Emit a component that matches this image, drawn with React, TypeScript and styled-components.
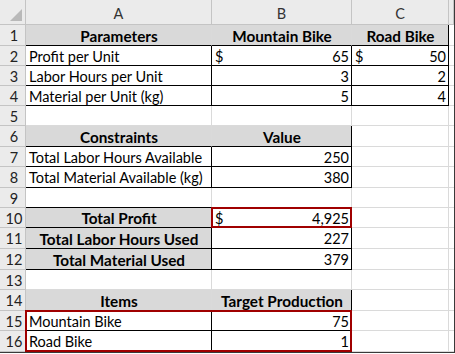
import React from 'react';
import styled, { createGlobalStyle } from 'styled-components';

const GlobalStyle = createGlobalStyle`
  html, body { margin: 0; padding: 0; background: #ffffff; }
  body { font-family: Lato, "Liberation Sans", sans-serif; }
`;

const ROW_HEIGHTS = [25, 21, 20, 20, 20, 20, 21, 20, 21, 20, 20, 21, 21, 20, 21, 20, 21];
const GRID = '#dadada';
const HEAD_LINE = '#c4c4c4';
const INK = '#000000';
const RED = '#a00000';

type Sides = { t?: boolean; r?: boolean; b?: boolean; l?: boolean };
type CellDef = {
  text?: string;
  money?: boolean;
  align?: 'left' | 'right' | 'center';
  head?: boolean;
  sides?: Sides;
};

const ALL: Sides = { t: true, r: true, b: true, l: true };
const HEAD: Sides = { b: true };
const END: Sides = { r: true };

const h = (text: string, extra: Sides = {}): CellDef => ({ text, head: true, align: 'center', sides: { ...HEAD, ...extra } });
const t = (text: string): CellDef => ({ text, align: 'left', sides: ALL });
const n = (text: string): CellDef => ({ text, align: 'right', sides: ALL });
const m = (text: string): CellDef => ({ text, money: true, sides: ALL });
const e: CellDef = {};

// rows 1..16, columns A..D
const DATA: CellDef[][] = [
  [h('Parameters'), h('Mountain Bike'), h('Road Bike', END), e],
  [t('Profit per Unit'), m('65'), m('50'), e],
  [t('Labor Hours per Unit'), n('3'), n('2'), e],
  [t('Material per Unit (kg)'), n('5'), n('4'), e],
  [e, e, e, e],
  [h('Constraints'), h('Value', END), e, e],
  [t('Total Labor Hours Available'), n('250'), e, e],
  [t('Total Material Available (kg)'), n('380'), e, e],
  [e, e, e, e],
  [h('Total Profit', ALL), m('4,925'), e, e],
  [h('Total Labor Hours Used', ALL), n('227'), e, e],
  [h('Total Material Used', ALL), n('379'), e, e],
  [e, e, e, e],
  [h('Items'), h('Target Production', END), e, e],
  [t('Mountain Bike'), n('75'), e, e],
  [t('Road Bike'), n('1'), e, e],
];

const side = (r: number, c: number, s: keyof Sides) => {
  const row = DATA[r];
  if (!row) return false;
  const cell = row[c];
  return !!(cell && cell.sides && cell.sides[s]);
};

const Sheet = styled.div`
  display: grid;
  grid-template-columns: 26px 186px 140px 97px 5px;
  grid-template-rows: ${ROW_HEIGHTS.map((v) => `${v}px`).join(' ')};
  width: 455px;
  box-sizing: border-box;
  border-right: 1px solid #3a3a3a;
  border-bottom: 1px solid #3a3a3a;
  overflow: hidden;
`;

type PosProps = { $r: number; $c: number };

const Base = styled.div<PosProps>`
  grid-row: ${(p) => p.$r + 1};
  grid-column: ${(p) => p.$c + 1};
  box-sizing: border-box;
  display: flex;
  align-items: center;
  min-width: 0;
  white-space: nowrap;
  overflow: hidden;
`;

const Corner = styled(Base)`
  background: #ebebeb;
  border-right: 1px solid ${HEAD_LINE};
  border-bottom: 1px solid ${HEAD_LINE};
  justify-content: flex-end;
  align-items: flex-end;
  padding: 0 3px 3px 0;
`;

const ColHead = styled(Base)`
  background: #ebebeb;
  border-right: 1px solid ${HEAD_LINE};
  border-bottom: 1px solid ${HEAD_LINE};
  justify-content: center;
  font-size: 14.5px;
  color: #333333;
  padding-top: 2px;
`;

const RowHead = styled(Base)`
  display: block;
  background: #ebebeb;
  border-right: 1px solid ${HEAD_LINE};
  border-bottom: 1px solid ${HEAD_LINE};
  text-align: center;
  line-height: 19px;
  padding: 1px 0 0 3px;
  font-size: 14.5px;
  color: #222222;
`;

const Cell = styled(Base)<{ $br: string; $bb: string; $head?: boolean; $align: string }>`
  background: ${(p) => (p.$head ? '#d9d9d9' : '#ffffff')};
  border-right: 1px solid ${(p) => p.$br};
  border-bottom: 1px solid ${(p) => p.$bb};
  justify-content: ${(p) =>
    p.$align === 'center' ? 'center' : p.$align === 'right' ? 'flex-end' : p.$align === 'between' ? 'space-between' : 'flex-start'};
  padding: 1px 2px 0 3px;
  font-size: ${(p) => (p.$head ? '15.3px' : '14.5px')};
  font-weight: ${(p) => (p.$head ? 700 : 400)};
  color: #000000;
`;

const Highlight = styled.div<{ $r1: number; $r2: number; $c1: number; $c2: number }>`
  grid-row: ${(p) => `${p.$r1 + 1} / ${p.$r2 + 2}`};
  grid-column: ${(p) => `${p.$c1 + 1} / ${p.$c2 + 2}`};
  margin: -1px 0 0 -1px;
  border: 2px solid ${RED};
  pointer-events: none;
  z-index: 2;
`;

const CornerMark = () => (
  <svg width="12" height="12" viewBox="0 0 12 12">
    <polygon points="12,0 12,12 0,12" fill="#b9b9b9" />
  </svg>
);

export default function App() {
  const letters = ['A', 'B', 'C', ''];
  return (
    <>
      <GlobalStyle />
      <Sheet>
        <Corner $r={0} $c={0}>
          <CornerMark />
        </Corner>
        {letters.map((l, i) => (
          <ColHead key={`ch${i}`} $r={0} $c={i + 1}>
            {l}
          </ColHead>
        ))}
        {DATA.map((row, ri) => (
          <React.Fragment key={`r${ri}`}>
            <RowHead $r={ri + 1} $c={0}>
              {ri + 1}
            </RowHead>
            {row.map((cell, ci) => {
              const right = side(ri, ci, 'r') || side(ri, ci + 1, 'l');
              const bottom = side(ri, ci, 'b') || side(ri + 1, ci, 't');
              return (
                <Cell
                  key={`c${ri}-${ci}`}
                  $r={ri + 1}
                  $c={ci + 1}
                  $br={right ? INK : GRID}
                  $bb={bottom ? INK : GRID}
                  $head={cell.head}
                  $align={cell.money ? 'between' : cell.align || 'left'}
                >
                  {cell.money ? (
                    <>
                      <span>$</span>
                      <span>{cell.text}</span>
                    </>
                  ) : (
                    cell.text
                  )}
                </Cell>
              );
            })}
          </React.Fragment>
        ))}
        <Highlight $r1={10} $r2={10} $c1={2} $c2={2} />
        <Highlight $r1={15} $r2={16} $c1={1} $c2={2} />
      </Sheet>
    </>
  );
}
